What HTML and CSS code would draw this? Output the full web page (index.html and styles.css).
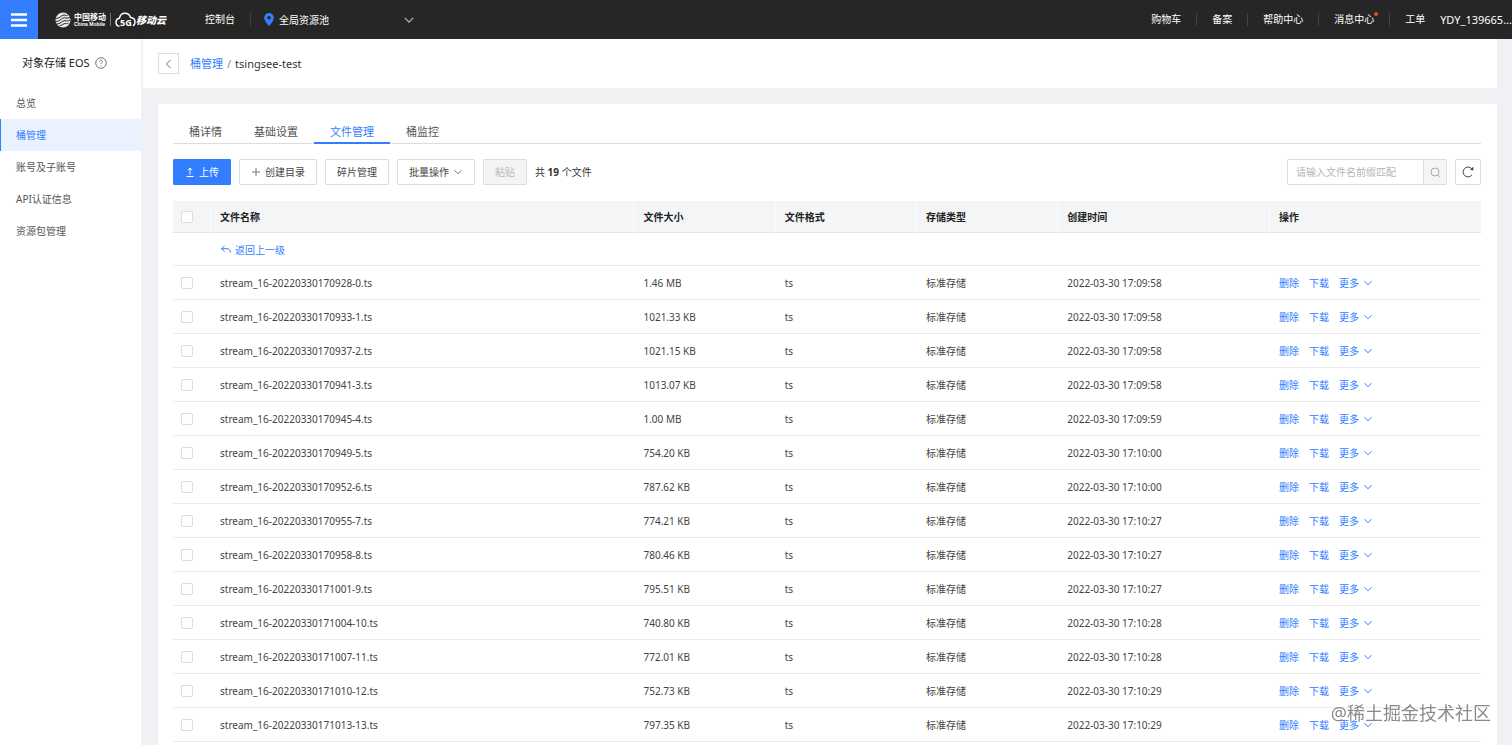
FILE: index.html
```html
<!DOCTYPE html>
<html lang="zh-CN">
<head>
    <meta charset="UTF-8">
    <meta name="viewport" content="width=device-width, initial-scale=1.0">
    <title>对象存储 EOS</title>
    <link rel="stylesheet" href="styles.css">
</head>
<body>

    <!-- Shared icons -->
    <svg class="sprite" aria-hidden="true">
        <symbol id="down" viewBox="0 0 10 10"><path d="M1.5 3.2 5 6.8 8.5 3.2" /></symbol>
    </svg>

    <header class="topbar">
        <button class="menu-btn" aria-label="菜单">
            <svg width="16" height="14" viewBox="0 0 16 14"><path d="M0 1.5h16M0 7h16M0 12.5h16" /></svg>
        </button>
        <a class="logo" href="#">
            <svg class="logo-mark" width="16" height="16" viewBox="0 0 16 16">
                <circle cx="8" cy="8" r="7.5" />
                <path d="M1.2 6.4C4 7 6.500 3 9 3s1.500 1.300 3.800.2M.8 9.500C4.500 10 7 5.400 9.600 5.700S11.500 7 15 5.200M1.600 12C5 12.600 7.500 8.200 10 8.600s2 1 5 -.600M4.500 13.800C7 13.500 8.500 11.300 10.500 11.500s1.500.3 3 -.300" />
            </svg>
            <span class="brand">
                <span class="brand-cn">中国移动</span>
                <span class="brand-en">China Mobile</span>
            </span>
            <span class="logo-line"></span>
            <svg class="logo-cloud" width="21" height="16" viewBox="0 0 21 16">
                <path d="M4.500 14.200C2.200 14 1 12.200 1 10.200c0-2.100 1.500-3.700 3.500-4C5 3.200 7.200 1.200 10 1.200c2.700 0 4.800 1.700 5.500 4.300 2.600.2 4.500 2 4.500 4.500 0 2-.8 3.200-2.200 3.900" />
                <text x="5" y="14">5G</text>
            </svg>
            <span class="cloud-name">移动云</span>
        </a>
        <a class="console" href="#">控制台</a>
        <button class="region">
            <svg width="10" height="13" viewBox="0 0 10 13"><path d="M5 0a4.800 4.800 0 0 0-4.800 4.900C.2 8 5 13 5 13s4.800-5 4.800-8.100A4.800 4.800 0 0 0 5 0zm0 3a1.800 1.800 0 1 1 0 3.600A1.800 1.800 0 0 1 5 3z" /></svg>
            <span class="region-name">全局资源池</span>
            <svg class="icon" width="12" height="12"><use href="#down" /></svg>
        </button>
        <nav class="top-links">
            <a href="#">购物车</a>
            <a href="#">备案</a>
            <a href="#">帮助中心</a>
            <a href="#"><span class="has-dot">消息中心</span></a>
            <a href="#">工单</a>
        </nav>
        <a class="user" href="#">YDY_139665...</a>
    </header>

    <div class="layout">
        <aside class="sidebar">
            <div class="side-title">
                对象存储 EOS
                <svg class="help" width="12" height="12" viewBox="0 0 12 12"><circle cx="6" cy="6" r="5.300" /><path d="M4.500 4.800C4.500 3.800 5.100 3.200 6 3.200s1.500.6 1.500 1.400C7.500 5.700 6 5.800 6 7.100M6 8.200v1" /></svg>
            </div>
            <nav class="side-nav">
                <a href="#">总览</a>
                <a href="#" class="active">桶管理</a>
                <a href="#">账号及子账号</a>
                <a href="#">API认证信息</a>
                <a href="#">资源包管理</a>
            </nav>
        </aside>

        <main class="main">
            <div class="crumbs">
                <button class="back" aria-label="返回">
                    <svg class="icon" width="10" height="10" viewBox="0 0 10 10"><path d="M6.500 1 2.500 5l4 4" /></svg>
                </button>
                <a href="#">桶管理</a>
                <span class="slash">/</span>
                <span>tsingsee-test</span>
            </div>

            <section class="card">
                <nav class="tabs">
                    <a href="#">桶详情</a>
                    <a href="#">基础设置</a>
                    <a href="#" class="active">文件管理</a>
                    <a href="#">桶监控</a>
                </nav>

                <div class="toolbar">
                    <button class="btn primary"><svg class="icon" width="10" height="10" viewBox="0 0 10 10"><path d="M5 7.500V1.200M2.800 3.300 5 1l2.200 2.300M1.500 9.500h7" /></svg>上传</button>
                    <button class="btn"><svg class="icon" width="10" height="10" viewBox="0 0 10 10"><path d="M5 1v8M1 5h8" /></svg>创建目录</button>
                    <button class="btn">碎片管理</button>
                    <button class="btn">批量操作<svg class="icon" width="10" height="10"><use href="#down" /></svg></button>
                    <button class="btn" disabled>粘贴</button>
                    <span class="total">共 <b>19</b> 个文件</span>
                    <form class="search">
                        <input type="text" placeholder="请输入文件名前缀匹配" aria-label="文件名前缀">
                        <button type="button" aria-label="搜索">
                            <svg class="icon" width="11" height="11" viewBox="0 0 11 11"><circle cx="5" cy="5" r="4" /><path d="m8 8 2 2.200" /></svg>
                        </button>
                    </form>
                    <button class="btn refresh" aria-label="刷新">
                        <svg class="icon" width="12" height="12" viewBox="0 0 12 12"><path d="M10 8.800A4.900 4.900 0 1 1 9.600 2.600" /><path class="solid" d="M11.300.8v3.600l-3.300-.7z" /></svg>
                    </button>
                </div>

                <table class="files">
                    <thead>
                        <tr>
                            <th class="col-check"><input type="checkbox" aria-label="全选"></th>
                            <th>文件名称</th>
                            <th class="col-info">文件大小</th>
                            <th class="col-info">文件格式</th>
                            <th class="col-info">存储类型</th>
                            <th class="col-wide">创建时间</th>
                            <th class="col-wide">操作</th>
                        </tr>
                    </thead>
                    <tbody id="fileRows">
                        <tr class="up-row">
                            <td></td>
                            <td colspan="6">
                                <a class="up" href="#"><svg class="icon" width="12" height="10" viewBox="0 0 12 10"><path d="M4.500 1 1.500 3.700l3 2.700M1.500 3.700H7c2.200 0 3.500 1.200 3.500 3.800" /></svg>返回上一级</a>
                            </td>
                        </tr>
                    </tbody>
                </table>
            </section>
        </main>
    </div>

    <div class="watermark">@稀土掘金技术社区</div>

    <script>
        const files = [
            ['stream_16-20220330170928-0.ts', '1.46 MB', '17:09:58'],
            ['stream_16-20220330170933-1.ts', '1021.33 KB', '17:09:58'],
            ['stream_16-20220330170937-2.ts', '1021.15 KB', '17:09:58'],
            ['stream_16-20220330170941-3.ts', '1013.07 KB', '17:09:58'],
            ['stream_16-20220330170945-4.ts', '1.00 MB', '17:09:59'],
            ['stream_16-20220330170949-5.ts', '754.20 KB', '17:10:00'],
            ['stream_16-20220330170952-6.ts', '787.62 KB', '17:10:00'],
            ['stream_16-20220330170955-7.ts', '774.21 KB', '17:10:27'],
            ['stream_16-20220330170958-8.ts', '780.46 KB', '17:10:27'],
            ['stream_16-20220330171001-9.ts', '795.51 KB', '17:10:27'],
            ['stream_16-20220330171004-10.ts', '740.80 KB', '17:10:28'],
            ['stream_16-20220330171007-11.ts', '772.01 KB', '17:10:28'],
            ['stream_16-20220330171010-12.ts', '752.73 KB', '17:10:29'],
            ['stream_16-20220330171013-13.ts', '797.35 KB', '17:10:29']
        ];

        const rows = files.map(([name, size, time]) => `
            <tr>
                <td><input type="checkbox" aria-label="${name}"></td>
                <td>${name}</td>
                <td>${size}</td>
                <td>ts</td>
                <td>标准存储</td>
                <td>2022-03-30 ${time}</td>
                <td>
                    <div class="actions">
                        <a href="#">删除</a>
                        <a href="#">下载</a>
                        <a href="#">更多<svg class="icon" width="10" height="10"><use href="#down" /></svg></a>
                    </div>
                </td>
            </tr>`);

        document.getElementById('fileRows').insertAdjacentHTML('beforeend', rows.join(''));
    </script>

</body>
</html>
```

FILE: styles.css
```css
* {
    box-sizing: border-box;
}

body {
    margin: 0;
    min-height: 100vh;
    display: flex;
    flex-direction: column;
    font-family: "Noto Sans", "Noto Sans CJK SC", sans-serif;
    font-size: 10px;
    line-height: 16px;
    color: #444;
    background-color: #eff1f4;
}

a {
    color: #337dff;
    text-decoration: none;
}

button,
input {
    font: inherit;
    color: inherit;
    margin: 0;
}

button {
    padding: 0;
    border: none;
    background: none;
    cursor: pointer;
}

svg {
    flex: none;
    display: block;
}

.sprite {
    position: absolute;
    width: 0;
    height: 0;
}

.icon {
    fill: none;
    stroke: currentColor;
    stroke-width: 1;
}

.icon .solid {
    fill: currentColor;
    stroke: none;
}

/* Top bar */
.topbar {
    display: flex;
    align-items: center;
    height: 39px;
    background-color: #262626;
    color: #fff;
    white-space: nowrap;
}

.topbar a {
    color: #fff;
}

.menu-btn {
    display: flex;
    align-items: center;
    justify-content: center;
    width: 38px;
    height: 39px;
    background-color: #337dff;
}

.menu-btn svg {
    stroke: #fff;
    stroke-width: 2.5;
}

.logo {
    display: flex;
    align-items: center;
    margin-left: 17px;
    width: 150px;
}

.logo-mark circle {
    fill: #e8e8e8;
}

.logo-mark path {
    fill: none;
    stroke: #262626;
    stroke-width: 1;
}

.brand {
    display: flex;
    flex-direction: column;
    margin-left: 3px;
    font-weight: bold;
}

.brand-cn {
    font-size: 8px;
    line-height: 9px;
}

.brand-en {
    font-family: "Liberation Sans", sans-serif;
    font-size: 5px;
    line-height: 6px;
}

.logo-line {
    width: 1px;
    height: 13px;
    margin: 0 4px;
    background-color: #777;
}

.logo-cloud path {
    fill: none;
    stroke: #fff;
    stroke-width: 1.5;
}

.logo-cloud text {
    fill: #fff;
    font-size: 9px;
    font-weight: bold;
}

.cloud-name {
    font-size: 10px;
    font-weight: 900;
    font-style: italic;
}

.console {
    padding-right: 15px;
    border-right: 1px solid #3f3f3f;
    line-height: 13px;
}

.region {
    display: flex;
    align-items: center;
    width: 151px;
    margin-left: 13px;
    gap: 5px;
}

.region path {
    fill: #337dff;
}

.region .icon {
    margin-left: auto;
    color: #bbb;
}

.region .icon,
.region .icon path {
    fill: none;
}

.top-links {
    display: flex;
    margin-left: auto;
}

.top-links a {
    padding: 0 15px;
    line-height: 13px;
    border-left: 1px solid #444;
}

.top-links a:first-child {
    border-left: none;
}

.has-dot {
    position: relative;
}

.has-dot::after {
    content: "";
    position: absolute;
    top: 0;
    right: -4px;
    width: 4px;
    height: 4px;
    border-radius: 50%;
    background-color: #f0452f;
}

.user {
    font-size: 11px;
}

/* Sidebar */
.layout {
    flex: 1;
    display: flex;
}

.sidebar {
    flex: none;
    width: 141px;
    margin-right: 2px;
    background-color: #fff;
}

.side-title {
    display: flex;
    align-items: center;
    gap: 5px;
    height: 48px;
    padding-left: 22px;
    font-size: 11px;
    color: #222;
}

.help {
    fill: none;
    stroke: #777;
}

.side-nav a {
    display: block;
    padding-left: 15px;
    border-left: 1px solid transparent;
    line-height: 32px;
    color: #555;
}

.side-nav a.active {
    color: #337dff;
    border-left-color: #337dff;
    background-color: #eaf1ff;
}

/* Main area */
.main {
    flex: 1;
    min-width: 0;
    display: flex;
    flex-direction: column;
    margin-right: 15px;
}

.crumbs {
    display: flex;
    align-items: center;
    height: 49px;
    padding-left: 15px;
    background-color: #fff;
    font-size: 11px;
    color: #333;
}

.back {
    display: flex;
    align-items: center;
    justify-content: center;
    width: 21px;
    height: 21px;
    margin-right: 11px;
    border: 1px solid #ddd;
    color: #777;
}

.slash {
    margin: 0 4px;
    color: #888;
}

.card {
    flex: 1;
    margin: 16px 0 0 15px;
    padding: 17px 16px 0 15px;
    background-color: #fff;
}

.tabs {
    display: flex;
    border-bottom: 1px solid #ddd;
    font-size: 11px;
}

.tabs a {
    padding: 0 16px;
    margin-bottom: -1px;
    line-height: 21px;
    border-bottom: 2px solid transparent;
    color: #555;
}

.tabs a.active {
    color: #337dff;
    border-bottom-color: #337dff;
}

.toolbar {
    display: flex;
    align-items: center;
    gap: 8px;
    margin: 15px 0 16px;
}

.btn {
    display: flex;
    align-items: center;
    gap: 4px;
    height: 26px;
    padding: 0 11px;
    border: 1px solid #ddd;
    border-radius: 1px;
    background-color: #fff;
}

.btn .icon {
    color: #777;
}

.btn.primary {
    border-color: #337dff;
    background-color: #337dff;
    color: #fff;
}

.btn.primary .icon {
    color: #fff;
}

.btn:disabled {
    background-color: #f4f4f4;
    color: #bbb;
}

.total {
    color: #333;
}

.search {
    display: flex;
    height: 26px;
    margin-left: auto;
    border: 1px solid #ddd;
    border-radius: 1px;
}

.search input {
    width: 135px;
    padding: 0 8px;
    border: none;
    outline: none;
}

.search input::placeholder {
    color: #b5b5b5;
}

.search button {
    display: flex;
    align-items: center;
    justify-content: center;
    width: 23px;
    border-left: 1px solid #ddd;
    background-color: #f5f5f5;
    color: #aaa;
}

.btn.refresh {
    width: 26px;
    padding: 0;
    justify-content: center;
}

.refresh .icon {
    color: #444;
}

/* File table */
.files {
    width: 100%;
    table-layout: fixed;
    border-spacing: 0;
}

.files th,
.files td {
    height: 34px;
    padding: 0 9px;
    text-align: left;
    border-bottom: 1px solid #ebebeb;
}

.files th {
    height: 32px;
    background-color: #f3f5f6;
    border-bottom-color: #e2e4e6;
    border-left: 1px solid #fafbfb;
    color: #222;
}

.files th:first-child {
    border-left: none;
}

.files .up-row td {
    height: 33px;
}

.col-check {
    width: 37px;
}

.col-info {
    width: 10.8%;
}

.col-wide {
    width: 16.2%;
}

.files th:first-child,
.files td:first-child {
    padding: 0 8px;
}

.files td + td {
    padding-left: 10px;
}

.files input {
    appearance: none;
    display: block;
    width: 12px;
    height: 12px;
    border: 1px solid #ddd;
    border-radius: 2px;
    background-color: #fff;
}

.up {
    display: inline-flex;
    align-items: center;
    gap: 3px;
    vertical-align: middle;
}

.actions {
    display: flex;
    gap: 10px;
}

.actions a {
    display: flex;
    align-items: center;
    gap: 4px;
}

.watermark {
    position: fixed;
    right: 21px;
    bottom: 18px;
    font-size: 18px;
    line-height: 27px;
    color: rgba(110, 110, 110, 0.8);
    pointer-events: none;
}
```
